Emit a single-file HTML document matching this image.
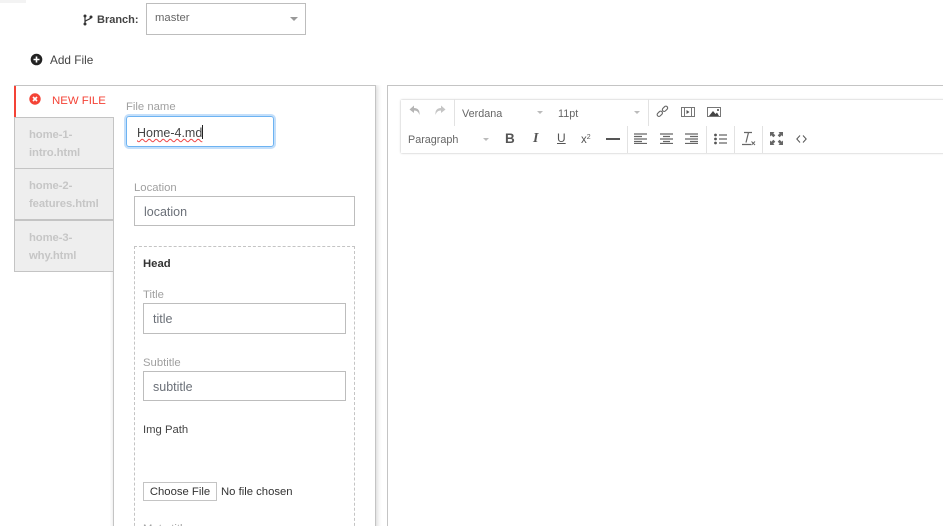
<!DOCTYPE html>
<html><head><meta charset="utf-8"><style>
html,body{margin:0;padding:0;background:#fff}
#r{position:relative;width:943px;height:526px;overflow:hidden;background:#fff;font-family:"Liberation Sans",sans-serif;font-size:11.5px;color:#333}
#r div,#r span.a,#r svg{position:absolute}
.t{white-space:nowrap;line-height:14px}
.lb{color:#a0a0a0;font-size:11.3px}
.in{box-sizing:border-box;border:1px solid #bdbdbd;background:#fff;color:#6b7078;font-size:12.5px;line-height:30px;padding-left:9px}
.tab{box-sizing:border-box;left:14px;width:100px;background:#eee;border:1px solid #c4c4c4;color:#c6c6c6;font-size:11.3px;font-weight:bold;line-height:18px;padding:8px 0 0 14px;letter-spacing:-.1px}
.mc{color:#666;font-size:10.8px}
.sep{width:1px;background:#e2e2e2}
.ic{fill:none;stroke:#666;stroke-width:1.1}
</style></head><body><div id="r">

<div style="left:0;top:0;width:26px;height:3px;background:#f3f3f3"></div>

<svg style="left:83px;top:14px" width="10" height="12" viewBox="0 0 10 12"><circle cx="2" cy="2" r="1.5" fill="#333"/><circle cx="2" cy="10" r="1.5" fill="#333"/><circle cx="8" cy="3" r="1.5" fill="#333"/><path d="M2 2V10M8 3C8 6 2 5.5 2 8" stroke="#333" stroke-width="1.2" fill="none"/></svg>
<div class="t" style="left:97px;top:13px;font-weight:bold;font-size:11px;color:#444">Branch:</div>
<div style="box-sizing:border-box;left:146px;top:3px;width:160px;height:32px;border:1px solid #bdbdbd"></div>
<div class="t" style="left:155px;top:11px;color:#666;font-size:11.3px">master</div>
<div style="left:290px;top:17px;width:0;height:0;border:4px solid transparent;border-top:4px solid #999;border-bottom:0"></div>

<svg style="left:30px;top:53px" width="13" height="13" viewBox="0 0 13 13"><circle cx="6.5" cy="6.5" r="5.8" fill="#222"/><path d="M6.5 3.5V9.5M3.5 6.5H9.5" stroke="#fff" stroke-width="1.6"/></svg>
<div class="t" style="left:50px;top:53px;color:#444;font-size:11.8px">Add File</div>

<!-- left panel -->
<div style="box-sizing:border-box;left:113px;top:85px;width:263px;height:460px;border:1px solid #c4c4c4;background:#fff;box-shadow:1px 0 5px rgba(0,0,0,.18);clip-path:inset(0 -8px 0 -3px)"></div>
<div style="left:14px;top:85px;width:100px;height:1px;background:#c4c4c4"></div>
<div style="left:14px;top:86px;width:2px;height:31px;background:#f44336"></div>
<div style="left:16px;top:86px;width:99px;height:32px;background:#fff"></div>
<svg style="left:29px;top:93px" width="12" height="12" viewBox="0 0 12 12"><circle cx="6" cy="6" r="5.7" fill="#f44336"/><path d="M4 4L8 8M8 4L4 8" stroke="#fff" stroke-width="1.6"/></svg>
<div class="t" style="left:52px;top:94px;color:#f44336;font-size:11.4px">NEW FILE</div>

<div class="tab" style="top:117px;height:52px">home-1-<br>intro.html</div>
<div class="tab" style="top:168px;height:52px">home-2-<br>features.html</div>
<div class="tab" style="top:220px;height:52px">home-3-<br>why.html</div>

<div class="t lb" style="left:126px;top:100px">File name</div>
<div style="box-sizing:border-box;left:126px;top:116px;width:148px;height:31px;border:1px solid #6db3f2;border-radius:3px;box-shadow:0 0 0 2px #c4dffa"></div>
<div class="t" style="left:137px;top:126px;font-size:12.5px;color:#444;text-decoration:underline wavy #e44;text-decoration-thickness:1px">Home-4.md</div>
<div style="left:202px;top:125px;width:1px;height:14px;background:#222"></div>

<div class="t lb" style="left:134px;top:181px">Location</div>
<div class="in" style="left:134px;top:196px;width:221px;height:30px">location</div>

<div style="box-sizing:border-box;left:134px;top:246px;width:221px;height:300px;border:1px dashed #c4c4c4"></div>
<div class="t" style="left:143px;top:257px;font-weight:bold;font-size:11.3px;color:#333">Head</div>
<div class="t lb" style="left:143px;top:288px">Title</div>
<div class="in" style="left:143px;top:303px;width:203px;height:31px">title</div>
<div class="t lb" style="left:143px;top:356px">Subtitle</div>
<div class="in" style="left:143px;top:371px;width:203px;height:30px">subtitle</div>
<div class="t" style="left:143px;top:423px;font-size:11.3px;color:#444">Img Path</div>
<div class="t" style="box-sizing:border-box;left:143px;top:482px;width:74px;height:19px;border:1px solid #c4c4c4;font-size:11.3px;line-height:19px;text-align:center;color:#333">Choose File</div>
<div class="t" style="left:221px;top:485px;font-size:11.3px;color:#333">No file chosen</div>
<div class="t lb" style="left:143px;top:522px">Meta title</div>

<!-- right panel -->
<div style="box-sizing:border-box;left:387px;top:85px;width:570px;height:460px;border:1px solid #c4c4c4;background:#fff"></div>
<div style="box-sizing:border-box;left:401px;top:100px;width:560px;height:53px;background:#fff;box-shadow:0 0 2px rgba(0,0,0,.3)"></div>

<svg style="left:409px;top:105px" width="12" height="11" viewBox="0 0 12 11"><path d="M5 0.5L0.5 4.5L5 8V5.5C8 5.5 9.5 7 10.5 10C11 5.5 9 3 5 3Z" fill="#b5b5b5"/></svg>
<svg style="left:434px;top:105px" width="12" height="11" viewBox="0 0 12 11"><path d="M7 0.5L11.5 4.5L7 8V5.5C4 5.5 2.5 7 1.5 10C1 5.5 3 3 7 3Z" fill="#c5c5c5"/></svg>
<div class="sep" style="left:454px;top:99px;height:27px"></div>
<div class="t mc" style="left:462px;top:107px">Verdana</div>
<div style="left:537px;top:111px;border:3px solid transparent;border-top:3px solid #bbb;border-bottom:0"></div>
<div class="t mc" style="left:558px;top:107px">11pt</div>
<div style="left:634px;top:111px;border:3px solid transparent;border-top:3px solid #bbb;border-bottom:0"></div>
<div class="sep" style="left:648px;top:99px;height:27px"></div>
<svg class="ic" style="left:656px;top:105px" width="13" height="13" viewBox="0 0 13 13"><rect x="0.8" y="7" width="6" height="3.6" rx="1.8" transform="rotate(-45 3.8 8.8)"/><rect x="6" y="2" width="6" height="3.6" rx="1.8" transform="rotate(-45 9 3.8)"/></svg>
<svg style="left:681px;top:107px" width="14" height="10" viewBox="0 0 14 10"><rect x=".5" y=".5" width="13" height="9" fill="none" stroke="#777"/><path d="M3.5 0V10M10.5 0V10" stroke="#777"/><path d="M5.5 3L8.5 5L5.5 7Z" fill="#555"/></svg>
<svg style="left:707px;top:107px" width="14" height="10" viewBox="0 0 14 10"><rect x=".5" y=".5" width="13" height="9" fill="none" stroke="#777"/><path d="M2 9L6 4L8.5 7L10 5.5L12 9Z" fill="#444"/><circle cx="11" cy="3" r="1" fill="#444"/></svg>

<div class="t mc" style="left:408px;top:133px">Paragraph</div>
<div style="left:483px;top:138px;border:3px solid transparent;border-top:3px solid #bbb;border-bottom:0"></div>
<div class="t" style="left:505px;top:132px;font-weight:bold;font-size:13.5px;color:#555">B</div>
<div class="t" style="left:533px;top:132px;font-weight:bold;font-style:italic;font-size:14px;color:#555;font-family:'Liberation Serif',serif">I</div>
<div class="t" style="left:557px;top:131px;font-size:12px;color:#555;text-decoration:underline">U</div>
<div class="t" style="left:581px;top:131px;font-size:11.5px;color:#555">x<span style="font-size:7px;vertical-align:4px">2</span></div>
<div style="left:606px;top:138px;width:14px;height:1.5px;background:#555"></div>
<div class="sep" style="left:627px;top:126px;height:27px"></div>
<svg style="left:634px;top:133px" width="14" height="11" viewBox="0 0 14 11"><path d="M0 1H13M0 3.5H8M0 6H13M0 8.5H8M0 10.5H13" stroke="#666" stroke-width="1.3"/></svg>
<svg style="left:660px;top:133px" width="14" height="11" viewBox="0 0 14 11"><path d="M0 1H13M3 3.5H10M0 6H13M3 8.5H10M0 10.5H13" stroke="#666" stroke-width="1.3"/></svg>
<svg style="left:685px;top:133px" width="14" height="11" viewBox="0 0 14 11"><path d="M0 1H13M5 3.5H13M0 6H13M5 8.5H13M0 10.5H13" stroke="#666" stroke-width="1.3"/></svg>
<div class="sep" style="left:706px;top:126px;height:27px"></div>
<svg style="left:714px;top:133px" width="14" height="12" viewBox="0 0 14 12"><circle cx="1.5" cy="2" r="1.4" fill="#555"/><circle cx="1.5" cy="6" r="1.4" fill="#555"/><circle cx="1.5" cy="10" r="1.4" fill="#555"/><path d="M5 2H13M5 6H13M5 10H13" stroke="#666" stroke-width="1.2"/></svg>
<div class="sep" style="left:734px;top:126px;height:27px"></div>
<svg style="left:742px;top:131px" width="14" height="15" viewBox="0 0 14 15"><path d="M2 1.5H10M6.5 1.5L4 11.5M0 13.5H9" stroke="#666" stroke-width="1.2" fill="none"/><path d="M9.5 10.5L13 14M13 10.5L9.5 14" stroke="#666"/></svg>
<div class="sep" style="left:762px;top:126px;height:27px"></div>
<svg style="left:770px;top:132px" width="13" height="13" viewBox="0 0 13 13"><path d="M0 0H4.5L3.3 1.3L5.3 3.4L3.4 5.3L1.3 3.3L0 4.5ZM13 0V4.5L11.7 3.3L9.6 5.3L7.7 3.4L9.7 1.3L8.5 0ZM0 13V8.5L1.3 9.7L3.4 7.7L5.3 9.6L3.3 11.7L4.5 13ZM13 13H8.5L9.7 11.7L7.7 9.6L9.6 7.7L11.7 9.7L13 8.5Z" fill="#666"/></svg>
<svg style="left:796px;top:135px" width="11" height="8" viewBox="0 0 11 8"><path d="M4 .5L.8 4L4 7.5M7 .5L10.2 4L7 7.5" fill="none" stroke="#555" stroke-width="1"/></svg>

</div></body></html>
